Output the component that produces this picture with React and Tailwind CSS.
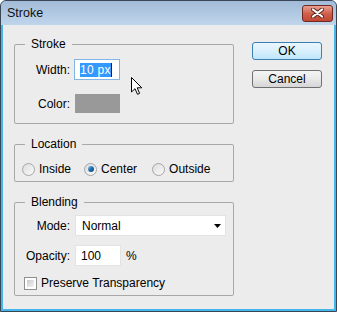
function Radio({ checked, label, className }) {
  return (
    <div className={"flex items-center " + (className || "")}>
      <div className="w-[13px] h-[13px] rounded-full border border-[#a6a6a6] bg-gradient-to-br from-[#dcdcdc] to-[#fbfbfb] flex items-center justify-center">
        {checked && (
          <div className="w-[6px] h-[6px] rounded-full bg-gradient-to-br from-[#7fc2ec] via-[#1f6fae] to-[#0e3f6d]" />
        )}
      </div>
      <span className="ml-[4px]">{label}</span>
    </div>
  )
}

function App() {
  return (
    <div className="relative w-[337px] h-[312px] flex flex-col bg-[#43b7ea] border border-[#3a4656] rounded-t-[6px] overflow-hidden font-['Liberation_Sans',Arial,sans-serif] text-[12px] leading-[14px] text-black">

      {/* title bar */}
      <div className="h-[24px] shrink-0 flex items-center justify-between pl-[6px] pr-[3px] bg-gradient-to-b from-[#a2bbd7] to-[#bfd5ec]">
        <span className="text-[12.5px] text-[#111]">Stroke</span>
        <div className="w-[31px] h-[17px] rounded-[3px] border border-[#6e2a20] bg-gradient-to-b from-[#e9a193] via-[#d0604d] to-[#c24633] flex items-center justify-center">
          <svg width="13" height="10" viewBox="0 0 13 10">
            <path d="M2 1.5 L11 8.5 M11 1.5 L2 8.5" stroke="#5a2a22" strokeWidth="4" strokeLinecap="round" />
            <path d="M2 1.5 L11 8.5 M11 1.5 L2 8.5" stroke="#ffffff" strokeWidth="2.2" strokeLinecap="round" />
          </svg>
        </div>
      </div>

      {/* body */}
      <div className="flex-1 mx-[2px] mb-[2px] bg-[#ececec] flex px-[11px]">

        <div className="w-[220px] pt-[12px] flex flex-col">

          <fieldset className="border border-[#a8a8a8] rounded-[2px] pb-[10px]">
            <legend className="ml-[10px] px-[6px] leading-[14px]">Stroke</legend>
            <div className="mt-[8px] flex items-center h-[21px]">
              <span className="w-[55px] text-right">Width:</span>
              <div className="ml-[4px] w-[46px] h-[21px] bg-white border border-[#82b6e6] flex items-center pl-[5px]">
                <span className="bg-[#3399ff] text-white leading-[14px] tracking-[0.3px]">10 px</span>
                <span className="w-[1px] h-[14px] bg-[#222]" />
              </div>
            </div>
            <div className="mt-[14px] flex items-center h-[19px]">
              <span className="w-[55px] text-right">Color:</span>
              <div className="ml-[5px] w-[45px] h-[19px] bg-[#999999]" />
            </div>
          </fieldset>

          <fieldset className="mt-[13px] border border-[#a8a8a8] rounded-[2px] pb-[5px]">
            <legend className="ml-[10px] px-[6px] leading-[14px]">Location</legend>
            <div className="mt-[11px] h-[14px] flex items-center pl-[7px]">
              <Radio label="Inside" />
              <Radio label="Center" checked className="ml-[13px]" />
              <Radio label="Outside" className="ml-[15px]" />
            </div>
          </fieldset>

          <fieldset className="mt-[13px] border border-[#a8a8a8] rounded-[2px] pb-[5px]">
            <legend className="ml-[10px] px-[6px] leading-[14px]">Blending</legend>
            <div className="mt-[6px] flex items-center h-[21px]">
              <span className="w-[55px] text-right">Mode:</span>
              <div className="ml-[5px] w-[151px] h-[21px] bg-white border border-[#e3e3e3] flex items-center justify-between pl-[6px] pr-[4px]">
                <span>Normal</span>
                <svg width="7" height="4" viewBox="0 0 7 4">
                  <path d="M0 0 H7 L3.5 4 Z" fill="#000" />
                </svg>
              </div>
            </div>
            <div className="mt-[9px] flex items-center h-[21px]">
              <span className="w-[55px] text-right">Opacity:</span>
              <div className="ml-[5px] w-[46px] h-[21px] bg-white border border-[#e3e3e3] flex items-center pl-[5px]">
                100
              </div>
              <span className="ml-[5px]">%</span>
            </div>
            <div className="mt-[10px] h-[14px] flex items-center pl-[9px]">
              <div className="w-[13px] h-[13px] border border-[#8f8f8f] bg-white p-[2px]">
                <div className="w-full h-full bg-gradient-to-br from-[#c9c9c9] to-[#f4f4f4]" />
              </div>
              <span className="ml-[4px]">Preserve Transparency</span>
            </div>
          </fieldset>

        </div>

        <div className="ml-[18px] pt-[17px] flex flex-col gap-[10px]">
          <button className="w-[70px] h-[18px] rounded-[3px] border border-[#3c7fb1] bg-gradient-to-b from-[#eaf6fd] via-[#d9f0fc] to-[#bee6fd] flex items-center justify-center leading-none">
            OK
          </button>
          <button className="w-[70px] h-[18px] rounded-[3px] border border-[#707070] bg-gradient-to-b from-[#f4f4f4] via-[#e9e9e9] to-[#d6d6d6] flex items-center justify-center leading-none">
            Cancel
          </button>
        </div>

      </div>

      {/* mouse pointer over the dialog */}
      <svg className="absolute left-[129px] top-[75px]" width="14" height="20" viewBox="0 0 14 20">
        <path d="M1.5 1.5 L1.5 16 L5 12.7 L7.5 18.3 L9.6 17.4 L7.2 11.8 L11.8 11.8 Z" fill="#fff" stroke="#000" strokeWidth="1" strokeLinejoin="miter" />
      </svg>
    </div>
  )
}

export default App
